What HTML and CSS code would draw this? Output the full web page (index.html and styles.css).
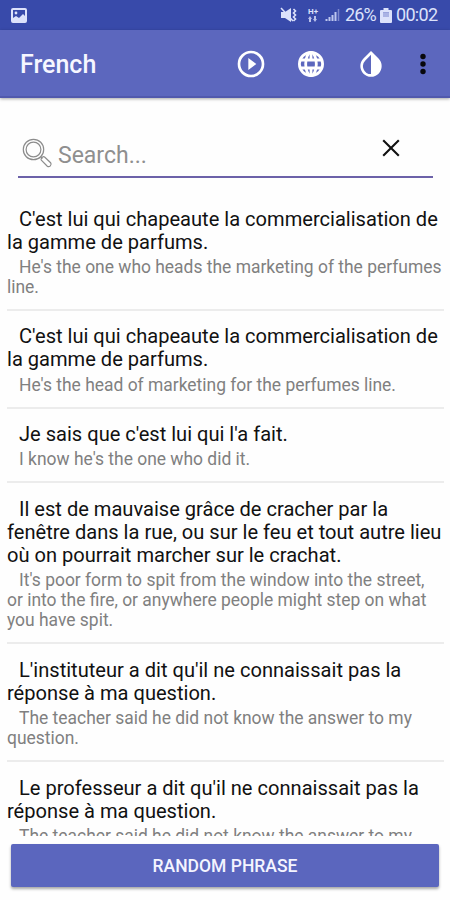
FILE: index.html
```
<!DOCTYPE html>
<html lang="fr">
<head>
<meta charset="utf-8">
<title>French</title>
<link rel="stylesheet" href="styles.css">
</head>
<body>
<div class="app">
  <header class="status">
    <svg class="picture" width="16" height="15" viewBox="0 0 16 15"><path fill-rule="evenodd" fill="#dce2fb" d="M2 0h12a2 2 0 0 1 2 2v11a2 2 0 0 1-2 2H2a2 2 0 0 1-2-2V2a2 2 0 0 1 2-2zM2 2v8l3-2 3 2 4-4 2 2V2z"/><circle cx="5" cy="5" r="1.4" fill="#dce2fb"/></svg>
    <div class="indicators">
      <svg class="mute" width="18" height="16" viewBox="0 0 18 16"><path fill="#dce2fb" d="M1 5h4l6-4v14l-6-4H1z"/><path d="M1 1l12 13" stroke="#dce2fb" stroke-width="1.5"/><path d="M13.5 2l2 2-2 2 2 2-2 2 2 2-2 2" fill="none" stroke="#dce2fb" stroke-width="1.6"/></svg>
      <div class="network"><b>H+</b><svg width="10" height="6" viewBox="0 0 10 6"><path fill="#b9c1ea" d="M0 3l2-3 2 3H3v3H1V3zM5 3h1V0h2v3h1L7 6z"/></svg></div>
      <svg class="signal" width="15" height="14" viewBox="0 0 15 14"><path d="M1.5 13v-2M4.5 13V9M7.500 13V7M10.500 13V4" stroke="#bdc6ef" stroke-width="2"/><path d="M13.500 13V1" stroke="#7d88cd" stroke-width="1.500"/></svg>
      <span class="percent">26%</span>
      <svg class="battery" width="12" height="15" viewBox="0 0 12 15"><path fill="#dce2fb" fill-rule="evenodd" d="M3.500 0h5v2H11a1 1 0 0 1 1 1v11a1 1 0 0 1-1 1H1a1 1 0 0 1-1-1V3a1 1 0 0 1 1-1h2.500zM3 4.500V9h6V4.500z"/><path fill="#aab3e4" d="M3 4.500h6V9H3z"/></svg>
      <span class="clock">00:02</span>
    </div>
  </header>
  <nav class="toolbar">
    <h1>French</h1>
    <div class="actions">
      <svg width="32" height="32" viewBox="0 0 24 24"><path fill="#fff" d="M10 16.500l6-4.500-6-4.500zM12 2a10 10 0 1 0 0 20 10 10 0 0 0 0-20zm0 18a8 8 0 1 1 0-16 8 8 0 0 1 0 16z"/></svg>
      <svg width="32" height="32" viewBox="0 0 24 24"><g fill="none" stroke="#fff" stroke-width="2.100"><circle cx="12" cy="12" r="8.700"/><ellipse cx="12" cy="12" rx="4" ry="8.700"/><path d="M12 3v5.500M12 15.500V21M4 9h16M4 15h16"/></g></svg>
      <svg width="32" height="32" viewBox="0 0 24 24"><path fill="#fff" d="M17.660 7.930L12 2.270 6.340 7.930a8 8 0 1 0 11.320 0zM12 19.590a6 6 0 0 1-4.240-10.240L12 5.100z"/></svg>
      <svg class="more" width="8" height="24" viewBox="0 0 8 24"><g fill="#08080c"><circle cx="4" cy="4.500" r="2.700"/><circle cx="4" cy="12" r="2.700"/><circle cx="4" cy="19.500" r="2.700"/></g></svg>
    </div>
  </nav>
  <div class="search">
    <svg class="lens" width="32" height="32" viewBox="0 0 32 32"><g fill="none" stroke="#8c8c8c" stroke-width="1.200"><circle cx="12.500" cy="12.500" r="10.200"/><circle cx="12.500" cy="12.500" r="7.400"/><path d="M19.500 19.500l2 2M20.300 23.200l6 6c2 1.500 5-1.300 3.300-3.500l-6-5.700c-1.500-1-4.500 1.500-3.300 3.200z"/></g></svg>
    <span class="hint">Search...</span>
    <svg class="clear" width="18" height="18" viewBox="0 0 18 18"><path d="M1.200 1.200l15.600 15.600M16.800 1.200L1.200 16.800" stroke="#111" stroke-width="2.100"/></svg>
  </div>
  <main class="list">
    <article><p class="fr">C'est lui qui chapeaute la commercialisation de<br>la gamme de parfums.</p><p class="en">He's the one who heads the marketing of the perfumes<br>line.</p></article>
    <article><p class="fr">C'est lui qui chapeaute la commercialisation de<br>la gamme de parfums.</p><p class="en">He's the head of marketing for the perfumes line.</p></article>
    <article><p class="fr">Je sais que c'est lui qui l'a fait.</p><p class="en">I know he's the one who did it.</p></article>
    <article><p class="fr">Il est de mauvaise grâce de cracher par la<br>fenêtre dans la rue, ou sur le feu et tout autre lieu<br>où on pourrait marcher sur le crachat.</p><p class="en">It's poor form to spit from the window into the street,<br>or into the fire, or anywhere people might step on what<br>you have spit.</p></article>
    <article><p class="fr">L'instituteur a dit qu'il ne connaissait pas la<br>réponse à ma question.</p><p class="en">The teacher said he did not know the answer to my<br>question.</p></article>
    <article><p class="fr">Le professeur a dit qu'il ne connaissait pas la<br>réponse à ma question.</p><p class="en">The teacher said he did not know the answer to my<br>question.</p></article>
  </main>
  <footer><button class="random">RANDOM PHRASE</button></footer>
</div>
</body>
</html>
```
FILE: styles.css
```
* { box-sizing: border-box; }
body { margin: 0; background: #fefefe; font-family: Roboto, sans-serif; }
p, h1 { margin: 0; }
svg { display: block; flex: none; }
.app { width: 450px; height: 900px; display: flex; flex-direction: column; overflow: hidden; }
.status { height: 30px; flex: none; background: #384aaa; display: flex; justify-content: space-between; padding: 0 12px 0 11px; align-items: center; color: #dce2fb; }
.indicators { display: flex; align-items: center; }
.network { width: 10px; margin: 0 7px 0 10px; }
.network b { display: block; font-size: 8px; line-height: 8px; }
.percent, .clock { font-size: 18px; line-height: 30px; white-space: nowrap; }
.percent { width: 31px; margin: 0 4px 0 5px; letter-spacing: -.9px; }
.clock { width: 42px; margin-left: 4px; letter-spacing: -.7px; }
.toolbar { height: 68px; flex: none; background: #5c67be; border-bottom: 2px solid #5159ad; box-shadow: 0 1px 3px rgba(0,0,0,.35); display: flex; align-items: center; justify-content: space-between; padding: 1px 24px 0 20px; }
.toolbar h1 { color: #f6f6ff; font-size: 25px; font-weight: 500; line-height: 30px; padding-top: 3px; }
.actions { display: flex; align-items: center; gap: 28px; }
.more { margin: 0 -1px 0 4px; }
.search { flex: none; height: 53px; margin: 27px 17px 0 18px; border-bottom: 2px solid #6c62a9; display: flex; align-items: center; }
.lens { margin: 5px 0 0 3px; }
.hint { flex: 1; margin: 9px 0 0 5px; font-size: 23px; color: #8f8f8f; }
.clear { margin: 0 33px 6px 0; }
.list { flex: none; height: 658px; padding: 29.500px 6px 0 7px; overflow: hidden; }
article { border-bottom: 2px solid #ececec; padding-bottom: 11.900px; margin-bottom: 14.600px; }
.fr, .en { text-indent: 12px; white-space: nowrap; }
.fr { font-size: 20.080px; line-height: 23.100px; color: #111; }
.en { margin-top: 3px; font-size: 17.450px; line-height: 20.100px; color: #808080; }
footer { flex: none; padding: 8px 11px; }
.random { display: block; width: 100%; height: 43px; border: 0; border-radius: 2px; background: #5b66be; color: #f4f4ff; font: 500 17.500px Roboto, sans-serif; box-shadow: 0 2px 3px rgba(0,0,0,.35); }
```
